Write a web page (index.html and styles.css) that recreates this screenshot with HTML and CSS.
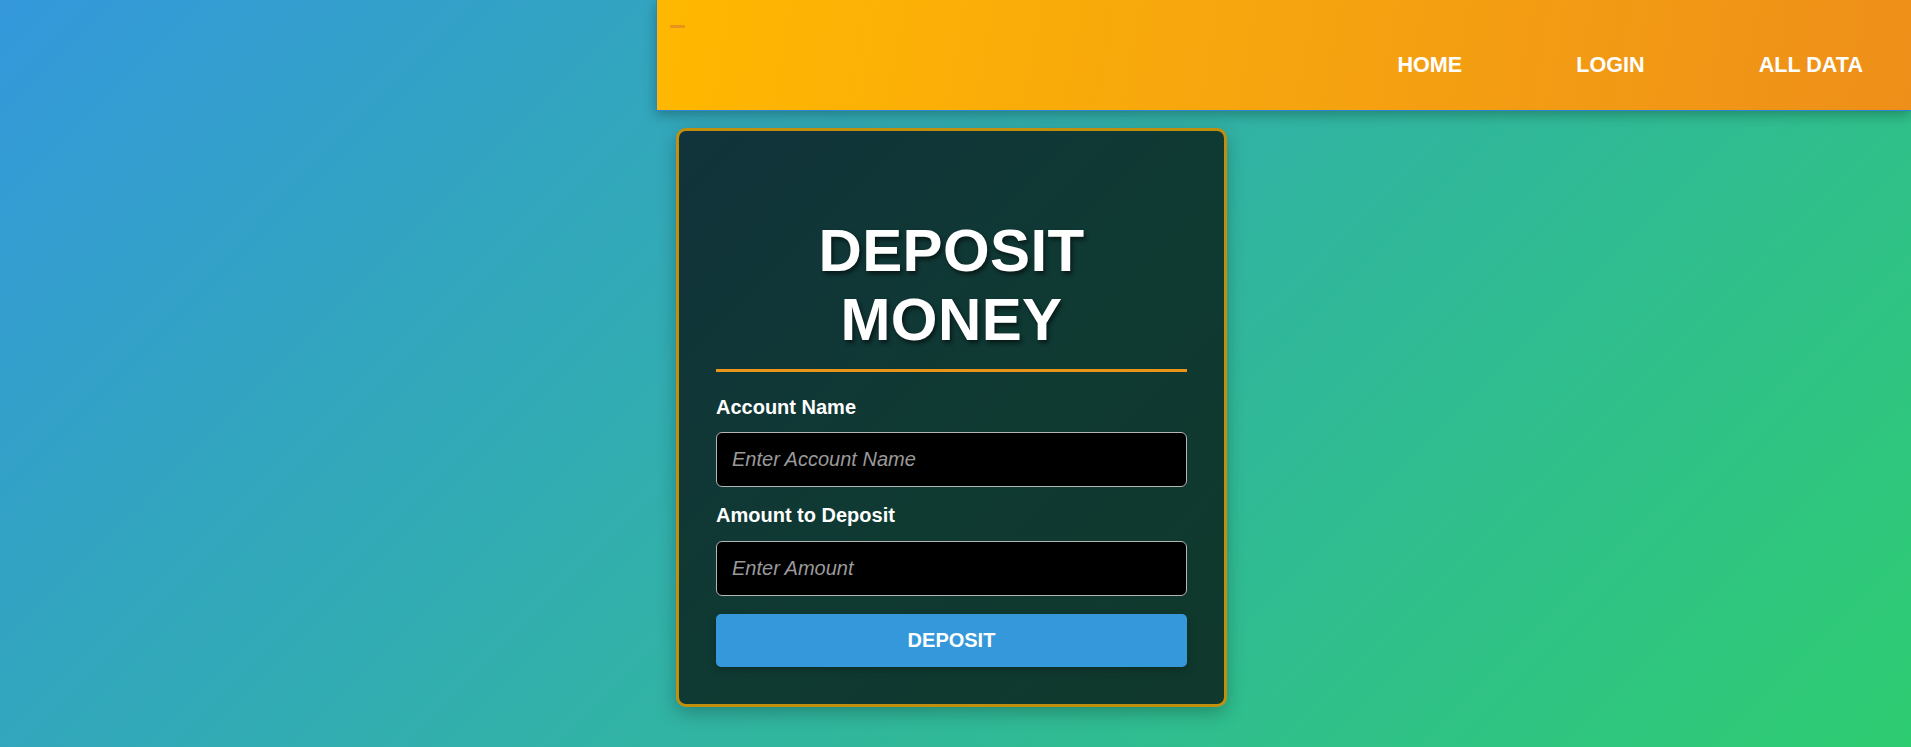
FILE: index.html
```html
<!DOCTYPE html>
<html lang="en">
<head>
<meta charset="utf-8">
<title>Deposit Money</title>
<link rel="stylesheet" href="styles.css">
</head>
<body>
  <div class="layout">
    <div class="side"></div>
    <div class="main">
      <nav class="navbar">
        <span class="toggler"></span>
        <ul class="nav-links">
          <li><a href="#">HOME</a></li>
          <li><a href="#">LOGIN</a></li>
          <li><a href="#">ALL DATA</a></li>
        </ul>
      </nav>
      <div class="card">
        <h1 class="card-title">DEPOSIT MONEY</h1>
        <form class="form">
          <label class="label" for="acct">Account Name</label>
          <input class="input" id="acct" type="text" placeholder="Enter Account Name">
          <label class="label label-second" for="amt">Amount to Deposit</label>
          <input class="input" id="amt" type="text" placeholder="Enter Amount">
          <button class="btn" type="button">DEPOSIT</button>
        </form>
      </div>
    </div>
  </div>
</body>
</html>
```
FILE: styles.css
```css
* { box-sizing: border-box; }
html, body { height: 100%; }
body {
  margin: 0;
  font-family: "Liberation Sans", Arial, sans-serif;
  background: linear-gradient(135deg, #3498db 0%, #2ecc71 100%);
  min-height: 747px;
  overflow: hidden;
}
.layout {
  display: grid;
  grid-template-columns: 656px 1fr;
}
.main {
  display: flex;
  flex-direction: column;
}
.navbar {
  height: 111px;
  display: flex;
  align-items: center;
  justify-content: space-between;
  background: linear-gradient(100deg, #ffb800 0%, #f6a40f 50%, #ee8f19 100%);
  border-left: 1px solid #2c86cf;
  border-bottom: 1px solid #2c86cf;
  box-shadow: 0 4px 12px rgba(0, 0, 0, 0.28);
  padding: 0 48px 0 13px;
  position: relative;
  z-index: 1;
}
.toggler {
  align-self: flex-start;
  margin-top: 25px;
  width: 15px;
  height: 3px;
  background: #e9951b;
}
.nav-links {
  list-style: none;
  margin: 20px 0 0 0;
  padding: 0;
  display: flex;
}
.nav-links li { margin-left: 114px; }
.nav-links a {
  color: #fff;
  text-decoration: none;
  font-weight: 700;
  font-size: 21.6px;
}
.card {
  width: 551px;
  margin: 17px 0 0 20px;
  border: 3px solid #c08f0e;
  border-radius: 10px;
  background: linear-gradient(135deg, #11333b 0%, #0f3a32 55%, #10382c 100%);
  box-shadow: 0 6px 18px rgba(0, 0, 0, 0.25);
  padding: 85px 37px 37px 37px;
}
.card-title {
  margin: 0;
  width: 100%;
  text-align: center;
  color: #fff;
  font-size: 60px;
  line-height: 69px;
  font-weight: 700;
  letter-spacing: 0.4px;
  text-shadow: 2px 3px 4px rgba(0, 0, 0, 0.55);
  padding: 0 60px 15px 60px;
  border-bottom: 3px solid #e8951a;
}
.form {
  display: flex;
  flex-direction: column;
  padding-top: 24px;
}
.label {
  color: #fff;
  font-weight: 700;
  font-size: 20px;
  line-height: 23px;
  margin-bottom: 13px;
}
.label-second { margin-top: 17px; margin-bottom: 14px; }
.input {
  height: 55px;
  width: 100%;
  background: #000;
  border: 1px solid #b5b5b5;
  border-radius: 6px;
  padding: 0 15px;
  color: #fff;
  font-family: "Liberation Sans", Arial, sans-serif;
  font-size: 20px;
  outline: none;
}
.input::placeholder {
  color: #9a9a9a;
  font-style: italic;
}
.btn {
  margin-top: 18px;
  height: 53px;
  width: 100%;
  border: none;
  border-radius: 5px;
  background: #3498db;
  color: #fff;
  font-family: "Liberation Sans", Arial, sans-serif;
  font-weight: 700;
  font-size: 20px;
  box-shadow: 0 3px 8px rgba(0, 0, 0, 0.2);
  cursor: pointer;
}
```
